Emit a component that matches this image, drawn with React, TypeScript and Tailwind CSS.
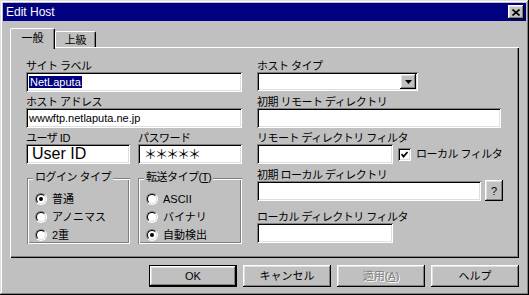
import React from 'react';

const sunken =
  'bg-white shadow-[inset_1px_1px_#808080,inset_-1px_-1px_#fff,inset_2px_2px_#000,inset_-2px_-2px_#dfdfdf]';
const raised =
  'bg-[#c0c0c0] shadow-[inset_-1px_-1px_#000,inset_1px_1px_#fff,inset_-2px_-2px_#808080,inset_2px_2px_#dfdfdf]';

const FieldLabel: React.FC<{ children: React.ReactNode }> = ({ children }) => (
  <div className="h-[16px] pt-[4px] leading-[13px] tracking-[-0.5px] whitespace-nowrap">{children}</div>
);

const Radio: React.FC<{ label: string; checked?: boolean }> = ({ label, checked }) => (
  <div className="flex items-center h-[18px] gap-[5px]">
    <div className="w-[12px] h-[12px] rounded-full border border-t-[#808080] border-l-[#808080] border-r-white border-b-white flex">
      <div className="flex-1 rounded-full border border-t-black border-l-black border-r-[#dfdfdf] border-b-[#dfdfdf] bg-white flex items-center justify-center">
        {checked && <div className="w-[4px] h-[4px] rounded-full bg-black" />}
      </div>
    </div>
    <span className="leading-[13px] whitespace-nowrap">{label}</span>
  </div>
);

const Group: React.FC<{ title: React.ReactNode; items: string[]; checked: number; className: string }> = ({
  title,
  items,
  checked,
  className,
}) => (
  <div
    className={`relative h-[66px] shadow-[inset_1px_1px_#808080,inset_-1px_-1px_#fff,inset_2px_2px_#fff,inset_-2px_-2px_#808080] ${className}`}
  >
    <div className="absolute left-[6px] top-[-7px] px-[2px] bg-[#c0c0c0] leading-[13px] tracking-[-0.5px] whitespace-nowrap">
      {title}
    </div>
    <div className="flex flex-col pt-[12px] pl-[8px]">
      {items.map((it, i) => (
        <Radio key={it} label={it} checked={i === checked} />
      ))}
    </div>
  </div>
);

const Button: React.FC<{ children: React.ReactNode; isDefault?: boolean; disabled?: boolean }> = ({
  children,
  isDefault,
  disabled,
}) => (
  <div className={`w-[88px] h-[22px] ${isDefault ? 'border border-black' : ''} flex`}>
    <div
      className={`flex-1 flex items-center justify-center ${raised} ${
        disabled ? 'text-[#808080] [text-shadow:1px_1px_0_#fff]' : ''
      }`}
    >
      {children}
    </div>
  </div>
);

export default function App() {
  return (
    <div className="w-[529px] h-[295px] bg-[#c0c0c0] p-[3px] flex flex-col overflow-hidden font-['Liberation_Sans','Noto_Sans_CJK_JP',sans-serif] text-[11px] text-black shadow-[inset_-1px_-1px_#000,inset_1px_1px_#dfdfdf,inset_-2px_-2px_#808080,inset_2px_2px_#fff]">
      {/* title bar */}
      <div className="h-[18px] bg-[#000080] flex items-center justify-between pl-[3px] pr-[2px]">
        <span className="text-white text-[12px] leading-[14px]">Edit Host</span>
        <div className={`w-[16px] h-[14px] flex items-center justify-center ${raised}`}>
          <svg width="8" height="7" viewBox="0 0 8 7">
            <path d="M0.5 0.5 L7.5 6.5 M7.5 0.5 L0.5 6.5" stroke="#000" strokeWidth="1.6" />
          </svg>
        </div>
      </div>

      <div className="flex flex-col px-[7px] pt-[7px]">
        {/* tabs */}
        <div className="flex items-end h-[19px]">
          <div className="relative z-10 w-[45px] h-[21px] -mb-[2px] bg-[#c0c0c0] border-t border-l border-white border-r border-r-black rounded-t-[2px] shadow-[inset_-1px_0_#808080] flex justify-center pt-[3px] leading-[13px]">
            一般
          </div>
          <div className="w-[41px] h-[16px] border-t border-l border-white border-r border-r-black rounded-t-[2px] shadow-[inset_-1px_0_#808080] flex justify-center pt-[2px] leading-[13px]">
            上級
          </div>
        </div>

        {/* panel */}
        <div className="h-[211px] pt-[9px] pl-[16px] flex gap-[15px] shadow-[inset_1px_1px_#fff,inset_-1px_-1px_#000,inset_-2px_-2px_#808080]">
          {/* left column */}
          <div className="w-[216px] flex flex-col">
            <FieldLabel>サイト ラベル</FieldLabel>
            <div className={`h-[20px] ${sunken} flex items-center pl-[3px]`}>
              <span className="bg-[#000080] text-white leading-[12px] px-[1px]">NetLaputa</span>
            </div>
            <FieldLabel>ホスト アドレス</FieldLabel>
            <div className={`h-[20px] ${sunken} flex items-center pl-[3px]`}>wwwftp.netlaputa.ne.jp</div>
            <div className="flex gap-[8px]">
              <div className="w-[104px] flex flex-col">
                <FieldLabel>ユーザ ID</FieldLabel>
                <div className={`h-[20px] ${sunken} flex items-center pl-[6px] text-[16px] leading-[16px]`}>User ID</div>
              </div>
              <div className="w-[104px] flex flex-col">
                <FieldLabel>パスワード</FieldLabel>
                <div
                  className={`h-[20px] ${sunken} flex items-center pl-[6px] text-[13px] leading-[14px] tracking-[-2px] font-['Noto_Sans_CJK_JP',sans-serif]`}
                >
                  ＊＊＊＊＊
                </div>
              </div>
            </div>
            <div className="flex gap-[8px] mt-[14px] pl-[1px]">
              <Group
                className="w-[104px]"
                title="ログイン タイプ"
                items={['普通', 'アノニマス', '2重']}
                checked={0}
              />
              <Group
                className="w-[105px]"
                title={
                  <>
                    転送タイプ(<span className="underline">T</span>)
                  </>
                }
                items={['ASCII', 'バイナリ', '自動検出']}
                checked={2}
              />
            </div>
          </div>

          {/* right column */}
          <div className="flex-1 flex flex-col">
            <FieldLabel>ホスト タイプ</FieldLabel>
            <div className="h-[20px]">
              <div className={`w-[161px] h-[19px] ${sunken} flex justify-end items-start pt-[2px] pr-[2px]`}>
                <div className={`w-[16px] h-[15px] ${raised} flex items-center justify-center`}>
                  <svg width="7" height="4" viewBox="0 0 7 4">
                    <polygon points="0,0 7,0 3.5,4" fill="#000" />
                  </svg>
                </div>
              </div>
            </div>
            <FieldLabel>初期 リモート ディレクトリ</FieldLabel>
            <div className={`w-[244px] h-[20px] ${sunken}`} />
            <FieldLabel>リモート ディレクトリ フィルタ</FieldLabel>
            <div className="flex items-center h-[20px]">
              <div className={`w-[136px] h-[20px] ${sunken}`} />
              <div className={`ml-[5px] w-[13px] h-[13px] ${sunken} flex items-center justify-center`}>
                <svg width="7" height="7" viewBox="0 0 7 7">
                  <path d="M0.5 3 L2.5 5.5 L6.5 1" fill="none" stroke="#000" strokeWidth="1.8" />
                </svg>
              </div>
              <span className="ml-[5px] tracking-[-0.5px] leading-[13px] whitespace-nowrap">ローカル フィルタ</span>
            </div>
            <div className="mt-[1px]">
              <FieldLabel>初期 ローカル ディレクトリ</FieldLabel>
            </div>
            <div className="flex items-start gap-[4px]">
              <div className={`w-[224px] h-[20px] ${sunken}`} />
              <div className={`w-[18px] h-[21px] -mt-[1px] ${raised} flex items-center justify-center leading-[12px]`}>?</div>
            </div>
            <div className="mt-[6px]">
              <FieldLabel>ローカル ディレクトリ フィルタ</FieldLabel>
            </div>
            <div className={`w-[136px] h-[20px] ${sunken}`} />
          </div>
        </div>

        {/* buttons */}
        <div className="flex justify-end gap-[6px] mt-[7px]">
          <Button isDefault>OK</Button>
          <Button>キャンセル</Button>
          <Button disabled>
            適用(<span className="underline">A</span>)
          </Button>
          <Button>ヘルプ</Button>
        </div>
      </div>
    </div>
  );
}
